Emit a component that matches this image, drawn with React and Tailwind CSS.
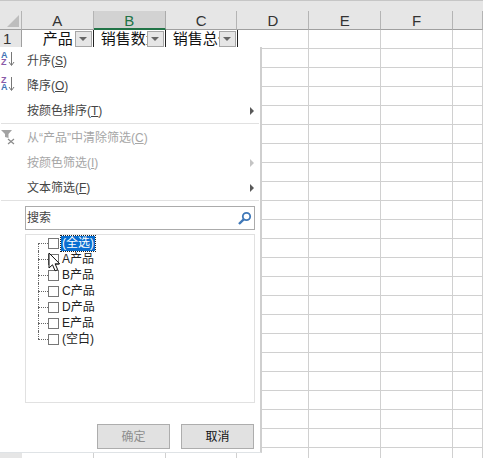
import React from 'react';

const COLUMNS = ['A', 'B', 'C', 'D', 'E', 'F', ''];
const WIDTHS = ['w-[72px]', 'w-[72px]', 'w-[72px]', 'w-[72px]', 'w-[72px]', 'w-[72px]', 'w-[30px]'];
const EMPTY_ROWS = Array.from({ length: 22 }, (_, i) => i);
const TREE = ['(全选)', 'A产品', 'B产品', 'C产品', 'D产品', 'E产品', '(空白)'];
const FONT = "font-['Liberation_Sans','Noto_Sans_CJK_SC',sans-serif]";

function Arrow() {
  return (
    <svg width="7" height="16" viewBox="0 0 7 16" className="absolute left-[8px] top-0">
      <path d="M3.5 1V14M1 11l2.5 3.5L6 11" fill="none" stroke="#777" strokeWidth="1" />
    </svg>
  );
}

function SortIcon({ top, bottom }) {
  return (
    <div className="relative flex h-[17px] w-[17px] -ml-[1px] flex-col pl-[1px] pt-[1px] text-[9px] leading-[7px] font-bold">
      <div className={`h-[7px] ${top === 'A' ? 'text-[#3f74b5]' : 'text-[#8a5aa8]'}`}>{top}</div>
      <div className={`h-[7px] ${bottom === 'A' ? 'text-[#3f74b5]' : 'text-[#8a5aa8]'}`}>{bottom}</div>
      <Arrow />
    </div>
  );
}

function FilterButton() {
  return (
    <div className="absolute right-[1px] bottom-[1px] flex h-[16px] w-[17px] items-center justify-center border border-[#a6a6a6] bg-[#e6e6e6]">
      <div className="h-0 w-0 border-x-[4px] border-t-[4px] border-x-transparent border-t-[#666]" />
    </div>
  );
}

function HeaderCell({ label, width, active }) {
  return (
    <div
      className={`${width} flex items-start justify-center border-r text-[15px] leading-[20px] ${
        active
          ? 'border-[#ababab] border-b-2 border-b-[#217346] bg-[#d2d2d2] text-[#217346]'
          : 'border-[#b4b4b4] border-b border-b-[#9f9f9f] text-[#333]'
      }`}
    >
      {label}
    </div>
  );
}

function TitleCell({ text, align, width = 'w-[72px]' }) {
  return (
    <div className={`${width} relative flex h-[18px] items-center overflow-hidden border-r border-[#222] text-[15px] leading-[18px] whitespace-nowrap text-[#111] ${align}`}>
      {text}
      <FilterButton />
    </div>
  );
}

function MenuItem({ label, hotkey, icon, disabled, submenu, after }) {
  return (
    <div className={`relative flex h-[25px] items-center pl-[27px] text-[12px] ${disabled ? 'text-[#a6a6a6]' : 'text-[#444]'}`}>
      {icon && <div className="absolute left-[1px] top-[3px]">{icon}</div>}
      <span>
        {label}(<span className="underline">{hotkey}</span>){after}
      </span>
      {submenu && (
        <div className={`absolute right-[6px] h-0 w-0 border-y-[4px] border-l-[4px] border-y-transparent ${disabled ? 'border-l-[#c4c4c4]' : 'border-l-[#595959]'}`} />
      )}
    </div>
  );
}

function TreeRow({ label, index }) {
  const last = index === TREE.length - 1;
  return (
    <div className="relative flex h-[16px] items-center pl-[22px]">
      {/* dotted tree lines */}
      <div className={`absolute left-[12px] w-0 border-l border-dotted border-[#666] ${index === 0 ? 'top-[8px] h-[8px]' : last ? 'top-0 h-[8px]' : 'top-0 h-[16px]'}`} />
      <div className="absolute left-[12px] top-[8px] h-0 w-[10px] border-t border-dotted border-[#666]" />
      <div className="h-[11px] w-[11px] shrink-0 border border-[#777] bg-white" />
      <div className={`ml-[2px] px-[1px] text-[12px] leading-[15px] text-[#222] ${index === 0 ? 'bg-[#0a6fd1] text-white outline-1 outline-dotted outline-[#222]' : ''}`}>
        {label}
      </div>
    </div>
  );
}

function FilterMenu() {
  return (
    <div className="absolute left-0 top-[47px] h-[406px] w-[262px] border-r-2 border-b border-r-[#cfcfcf] border-b-[#dfe3e6] bg-white pt-[1px]">
      <MenuItem
        label="升序"
        hotkey="S"
        icon={<SortIcon top="A" bottom="Z" />}
      />
      <MenuItem
        label="降序"
        hotkey="O"
        icon={<SortIcon top="Z" bottom="A" />}
      />
      <MenuItem label="按颜色排序" hotkey="T" submenu />
      <div className="mx-[1px] h-0 border-t border-[#e1e1e1]" />
      <div className="h-[1px]" />
      <MenuItem
        label="从“产品”中清除筛选"
        hotkey="C"
        disabled
        icon={
          <svg width="17" height="17" viewBox="0 0 17 17" className="mt-[1px]">
            <path d="M0 1h11L7.5 5V9L4 8V5z" fill="#a3a3a3" />
            <path d="M7 10l6 5M13 10l-6 5" stroke="#8b8b8b" strokeWidth="1.2" />
          </svg>
        }
      />
      <MenuItem label="按颜色筛选" hotkey="I" disabled submenu />
      <MenuItem label="文本筛选" hotkey="F" submenu />
      <div className="mx-[1px] h-0 border-t border-[#e1e1e1]" />
      <div className="ml-[25px] mt-[5px] flex h-[24px] w-[230px] items-center justify-between border border-[#ababab] pl-[1px] pr-[2px] text-[12px] text-[#444]">
        <span>搜索</span>
        <svg width="15" height="15" viewBox="0 0 15 15">
          <circle cx="9.5" cy="5.5" r="3.7" fill="none" stroke="#3f78b8" strokeWidth="1.8" />
          <path d="M6.7 8.3L2 13" stroke="#3f78b8" strokeWidth="2.4" />
        </svg>
      </div>
      <div className="relative ml-[25px] mt-[4px] h-[169px] w-[230px] border border-[#e1e1e1]">
        {TREE.map((label, index) => (
          <TreeRow key={label} label={label} index={index} />
        ))}
        {/* mouse pointer */}
        <svg width="13" height="20" viewBox="0 0 13 20" className="absolute left-[22px] top-[17px]">
          <path d="M1 1v15l3.5-3.2 2.6 6 2.6-1.1-2.6-5.9h4.6z" fill="#fff" stroke="#111" strokeWidth="1" />
        </svg>
      </div>
      <div className="ml-[97px] mt-[21px] flex gap-[11px] text-[12px]">
        <div className="flex h-[25px] w-[73px] items-center justify-center border border-[#adadad] bg-[#e1e1e1] text-[#8f8f8f]">确定</div>
        <div className="flex h-[25px] w-[73px] items-center justify-center border border-[#adadad] bg-[#e1e1e1] text-[#111]">取消</div>
      </div>
    </div>
  );
}

export default function App() {
  return (
    <div className={`relative h-[458px] w-[483px] overflow-hidden bg-white ${FONT}`}>
      {/* header strip */}
      <div className="h-[11px] border-t border-[#c6c6c6] bg-[#e6e6e6]" />
      <div className="flex h-[19px] bg-[#e6e6e6]">
        <div className="relative h-full w-[22px] border-r border-b border-[#b4b4b4] border-b-[#9f9f9f]">
          <div className="absolute bottom-[2px] right-[2px] h-0 w-0 border-b-[12px] border-l-[12px] border-b-[#bdbdbd] border-l-transparent" />
        </div>
        {COLUMNS.map((column, index) => (
          <HeaderCell key={index} label={column} width={WIDTHS[index]} active={column === 'B'} />
        ))}
      </div>

      {/* row 1 */}
      <div className="flex h-[19px] border-b border-[#d0d0d0]">
        <div className="flex w-[22px] items-center border-r border-[#9f9f9f] bg-[#e6e6e6] pl-[3px] text-[15px] text-[#333]">1</div>
        <TitleCell text="产品" align="justify-end pr-[20px]" />
        <TitleCell text="销售数量" align="pl-[7px]" />
        <TitleCell text="销售总价" align="pl-[7px]" />
        {WIDTHS.slice(3).map((width, index) => (
          <div key={index} className={`${width} border-r border-[#d0d0d0]`} />
        ))}
      </div>

      {/* empty rows */}
      {EMPTY_ROWS.map(row => (
        <div key={row} className="flex h-[19px] border-b border-[#d0d0d0]">
          <div className="w-[22px] bg-[#e6e6e6]" />
          {WIDTHS.map((width, index) => (
            <div key={index} className={`${width} border-r border-[#d0d0d0]`} />
          ))}
        </div>
      ))}

      <FilterMenu />
    </div>
  );
}
